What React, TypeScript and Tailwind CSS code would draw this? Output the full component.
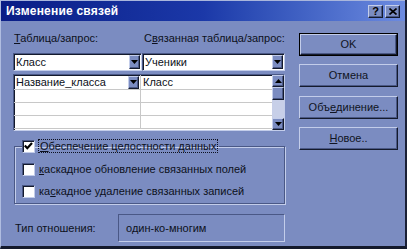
import React from 'react';

const face = 'bg-[#7b8cc1]';
const raised = 'border border-t-[#c3cdea] border-l-[#c3cdea] border-r-[#141a2c] border-b-[#141a2c] shadow-[inset_-1px_-1px_0_#4a5886]';
const sunken = 'border border-t-[#4a5886] border-l-[#4a5886] border-r-[#c3cdea] border-b-[#c3cdea] shadow-[inset_1px_1px_0_#141a2c]';

function Arrow({ up = false }: { up?: boolean }) {
  return (
    <svg width="7" height="4" viewBox="0 0 7 4">
      <path d={up ? 'M3.5 0L7 4H0Z' : 'M0 0H7L3.5 4Z'} fill="#000" />
    </svg>
  );
}

function DropBtn() {
  return (
    <div className={`w-[11px] h-full ${face} ${raised} flex items-center justify-center`}>
      <Arrow />
    </div>
  );
}

function Check({ checked = false }: { checked?: boolean }) {
  return (
    <div className={`w-[13px] h-[13px] bg-white ${sunken} flex items-center justify-center shrink-0`}>
      {checked && (
        <svg width="9" height="8" viewBox="0 0 9 8">
          <path d="M0.8 3.5L3.3 6.2L8 1" stroke="#000" strokeWidth="2.2" fill="none" />
        </svg>
      )}
    </div>
  );
}

function Btn({ children, def = false }: { children: React.ReactNode; def?: boolean }) {
  return (
    <div className={`h-[23px] w-[99px] ${def ? 'border border-black' : ''}`}>
      <div className={`h-full w-full ${face} ${raised} flex items-center justify-center text-[#101423]`}>
        {children}
      </div>
    </div>
  );
}

export default function App() {
  return (
    <div
      className={`w-[407px] h-[249px] ${face} flex flex-col border-l border-l-[#b0bde0] border-r-2 border-r-[#1a2036] border-b-[3px] border-b-[#141a2c] overflow-hidden text-[11px] leading-[13px] text-[#0d1120]`}
      style={{ fontFamily: '"Liberation Sans", Arial, sans-serif' }}
    >
      {/* title bar */}
      <div className="h-[21px] shrink-0 border-t border-t-[#a9b6dc] bg-gradient-to-r from-[#0a1d86] via-[#1b38a8] to-[#6d8be0] flex items-center pl-[5px] pr-[5px]">
        <span className="text-white font-bold text-[12px] tracking-[0.2px]">Изменение связей</span>
        <div className="ml-auto flex gap-[2px]">
          <div className={`w-[15px] h-[13px] ${face} ${raised} flex items-center justify-center font-bold text-[11px] text-black leading-none`}>?</div>
          <div className={`w-[15px] h-[13px] ${face} ${raised} flex items-center justify-center`}>
            <svg width="8" height="7" viewBox="0 0 8 7">
              <path d="M0.5 0.5L7.5 6.5M7.5 0.5L0.5 6.5" stroke="#000" strokeWidth="1.6" />
            </svg>
          </div>
        </div>
      </div>

      <div className="flex flex-1">
        {/* left column */}
        <div className="w-[284px] pl-[12px] flex flex-col">
          <div className="flex mt-[11px]">
            <span className="w-[131px] pl-[1px]"><u>Т</u>аблица/запрос:</span>
            <span>С<u>в</u>язанная таблица/запрос:</span>
          </div>

          <div className="flex mt-[8px] h-[18px]">
            <div className={`w-[129px] h-full bg-white ${sunken} flex items-center pl-[2px]`}>
              <span className="flex-1">Класс</span>
              <div className="h-[14px] mr-[1px]"><DropBtn /></div>
            </div>
            <div className={`flex-1 h-full bg-white ${sunken} flex items-center pl-[2px]`}>
              <span className="flex-1">Ученики</span>
              <div className="h-[14px] mr-[1px]"><DropBtn /></div>
            </div>
          </div>

          <div className={`mt-[3px] h-[57px] bg-white ${sunken} flex`}>
            <div className="flex-1 flex flex-col">
              {[0, 1, 2, 3].map((i) => (
                <div key={i} className={`flex ${i === 0 ? 'h-[15px]' : 'h-[13px]'} border-b border-b-[#c8c8c8]`}>
                  <div className="w-[127px] border-r border-r-[#c8c8c8] flex items-center pl-[2px]">
                    {i === 0 && (
                      <>
                        <span className="flex-1">Название_класса</span>
                        <div className="h-[13px] mr-[1px]"><DropBtn /></div>
                      </>
                    )}
                  </div>
                  <div className="flex-1 flex items-center pl-[2px]">{i === 0 && 'Класс'}</div>
                </div>
              ))}
            </div>
            <div className="w-[12px] flex flex-col bg-[#c7cfe8]">
              <div className={`h-[12px] ${face} ${raised} flex items-center justify-center`}><Arrow up /></div>
              <div className={`h-[13px] ${face} ${raised}`} />
              <div className="flex-1" />
              <div className={`h-[12px] ${face} ${raised} flex items-center justify-center`}><Arrow /></div>
            </div>
          </div>

          <fieldset className="mt-[8px] ml-[1px] h-[65px] border border-[#4a5886] shadow-[inset_1px_1px_0_#c3cdea,1px_1px_0_#c3cdea] pl-[7px]">
            <legend className="ml-0 px-0 pr-[1px]">
              <div className="flex items-center gap-[3px]">
                <Check checked />
                <span className="border border-dotted border-[#0d1120] px-[1px] leading-[12px]"><u>О</u>беспечение целостности данных</span>
              </div>
            </legend>
            <div className="flex items-center gap-[4px] mt-[10px]">
              <Check />
              <span><u>к</u>аскадное обновление связанных полей</span>
            </div>
            <div className="flex items-center gap-[4px] mt-[9px]">
              <Check />
              <span>ка<u>с</u>кадное удаление связанных записей</span>
            </div>
          </fieldset>

          <div className="flex items-center mt-[10px]">
            <span className="w-[105px] pl-[2px]">Тип отношения:</span>
            <div className="flex-1 h-[28px] border border-t-[#4a5886] border-l-[#4a5886] border-r-[#c3cdea] border-b-[#c3cdea] flex items-center pl-[7px]">
              один-ко-многим
            </div>
          </div>
        </div>

        {/* right column */}
        <div className="ml-[14px] pt-[12px] flex flex-col gap-[8px]">
          <Btn def>OK</Btn>
          <Btn>Отмена</Btn>
          <div className="mt-[1px]"><Btn>Объ<u>е</u>динение...</Btn></div>
          <Btn><u>Н</u>овое..</Btn>
        </div>
      </div>
    </div>
  );
}
